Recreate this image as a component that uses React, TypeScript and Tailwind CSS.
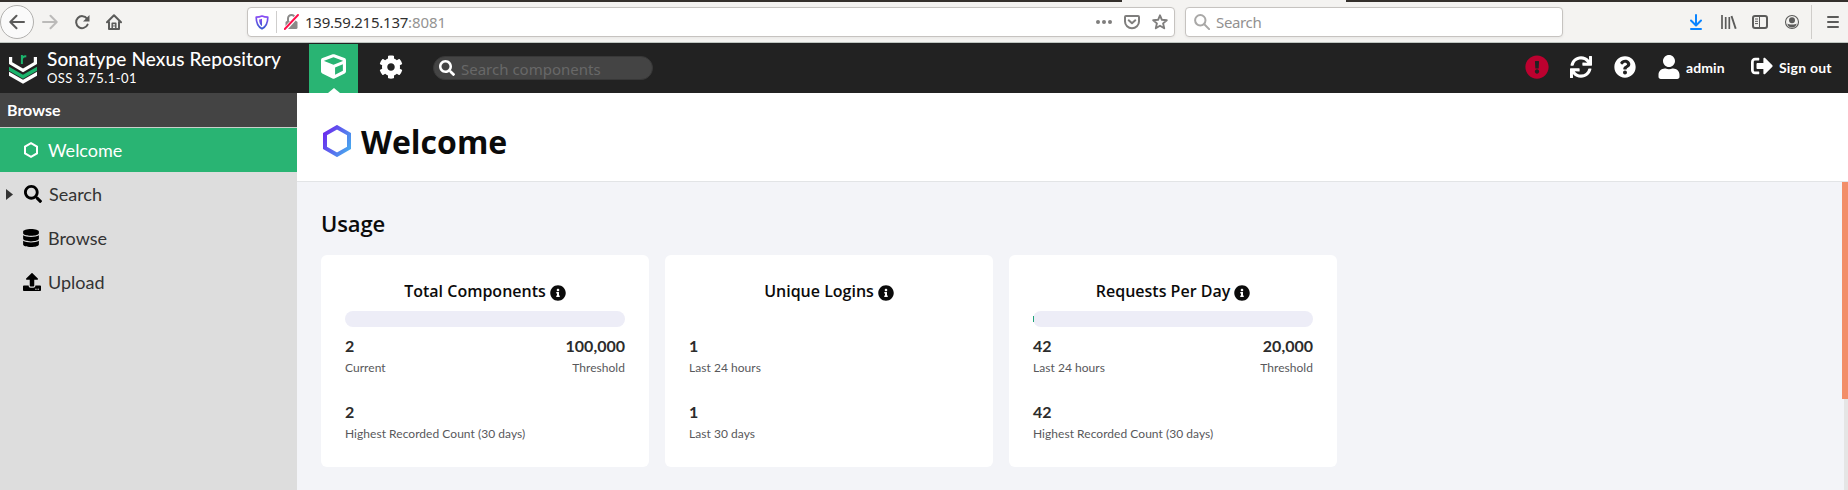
import type { ReactNode } from 'react';
import {
  FaCog,
  FaCube,
  FaDatabase,
  FaExclamationCircle,
  FaInfoCircle,
  FaQuestionCircle,
  FaSearch,
  FaSignOutAlt,
  FaSync,
  FaUpload,
  FaUser,
} from 'react-icons/fa';

function BrowserBar() {
  return (
    <div className="flex h-[43px] shrink-0 flex-col border-b border-[#bfc6c1] bg-[#f4f3f1]">
      <div className="flex h-[2px] shrink-0 justify-between">
        <div className="w-[1122px] bg-[#34302c]" />
        <div className="w-[502px] bg-[#34302c]" />
      </div>
      <div className="flex h-10 items-center font-['Noto_Sans',sans-serif] text-[15px]">
        <div className="flex h-[34px] w-[34px] shrink-0 items-center justify-center rounded-full border border-[#b1b0ae] bg-[#fafafa]">
          <svg width="16" height="16" viewBox="0 0 16 16" fill="none" stroke="#5b5b5a" strokeWidth="2" strokeLinecap="round" strokeLinejoin="round">
            <path d="M15 8H1.5M7.5 1.8 1.3 8l6.2 6.2" />
          </svg>
        </div>
        <svg className="ml-2 shrink-0" width="16" height="16" viewBox="0 0 16 16" fill="none" stroke="#bbbab9" strokeWidth="2" strokeLinecap="round" strokeLinejoin="round">
          <path d="M1 8h13.5M8.5 1.8 14.7 8l-6.2 6.2" />
        </svg>
        <svg className="ml-4 shrink-0" width="16" height="16" viewBox="0 0 16 16" fill="none" stroke="#5b5b5a" strokeWidth="2" strokeLinecap="round">
          <path d="M13.6 10.6a6 6 0 1 1-.6-6" />
          <path d="M15.5 1v6.5H9z" fill="#5b5b5a" stroke="none" />
        </svg>
        <svg className="ml-4 shrink-0" width="16" height="16" viewBox="0 0 16 16" fill="none" stroke="#5b5b5a" strokeWidth="2" strokeLinecap="round" strokeLinejoin="round">
          <path d="M1 8.2 8 1.2l7 7M3 8v7h10V8" />
          <path d="M6.2 15V9.2h3.6V15" strokeWidth="1.5" />
          <path d="M8 11v1.5" strokeWidth="1" />
        </svg>
        <div className="ml-[125px] flex h-[30px] w-[928px] shrink-0 items-center rounded-[4px] border border-[#c6c3c0] bg-white pl-[7px] pr-[6px] shadow-[0_1px_3px_rgba(0,0,0,0.06)]">
          <svg width="14" height="15" viewBox="0 0 14 15" fill="none">
            <defs>
              <linearGradient id="shield" x1="0" y1="0" x2="0" y2="1">
                <stop offset="0" stopColor="#8a4bf5" />
                <stop offset="1" stopColor="#3a5bd0" />
              </linearGradient>
            </defs>
            <path d="M7 1c2 .9 4 1.2 5.8 1.2 0 5-.8 9-5.8 11.6C2 11.200 1.200 7.200 1.200 2.200 3 2.200 5 1.900 7 1z" stroke="url(#shield)" strokeWidth="1.7" strokeLinejoin="round" />
            <path d="M7 3.700c-.9.4-1.800.6-2.900.7.1 3 .8 5.300 2.900 6.800z" fill="url(#shield)" />
          </svg>
          <div className="ml-[7px] h-[22px] w-px bg-[#cfcecd]" />
          <svg className="ml-[7px]" width="15" height="16" viewBox="0 0 15 16" fill="none">
            <path d="M4 8V4.500a3.500 3.500 0 0 1 7 0V8" stroke="#8b8a89" strokeWidth="2" />
            <rect x="1.500" y="7" width="12" height="8" rx="1.500" fill="#8b8a89" />
            <path d="M.8 15.500 14 1.200" stroke="#fff" strokeWidth="4" />
            <path d="M.8 15 14 1" stroke="#ff0f4b" strokeWidth="1.900" strokeLinecap="round" />
          </svg>
          <span className="ml-[6px] tracking-[-0.24px] text-[#303030]">
            139.59.215.137<span className="tracking-[-0.1px] text-[#949392]">:8081</span>
          </span>
          <svg className="ml-auto" width="16" height="16" viewBox="0 0 16 16" fill="#7f7e7d">
            <circle cx="2" cy="8" r="2" />
            <circle cx="8" cy="8" r="2" />
            <circle cx="14" cy="8" r="2" />
          </svg>
          <svg className="ml-3" width="16" height="16" viewBox="0 0 16 16" fill="none" stroke="#7f7e7d" strokeWidth="2" strokeLinecap="round" strokeLinejoin="round">
            <path d="M2 2h12a1 1 0 0 1 1 1v4.500a7 6.700 0 0 1-14 0V3a1 1 0 0 1 1-1z" />
            <path d="M4.700 6.300 8 9.300l3.300-3" />
          </svg>
          <svg className="ml-3" width="16" height="16" viewBox="0 0 16 16" fill="none" stroke="#7f7e7d" strokeWidth="1.900" strokeLinejoin="round">
            <path d="m8 1.300 1.900 4.500 4.900.4-3.700 3.200 1.100 4.900L8 11.800l-4.200 2.500 1.100-4.900L1.200 6.200l4.900-.4z" />
          </svg>
        </div>
        <div className="ml-[10px] flex h-[30px] w-[378px] shrink-0 items-center rounded-[4px] border border-[#c6c3c0] bg-white pl-2 shadow-[0_1px_3px_rgba(0,0,0,0.06)]">
          <svg width="16" height="16" viewBox="0 0 16 16" fill="none" stroke="#a9a8a7" strokeWidth="2" strokeLinecap="round">
            <circle cx="6.300" cy="6.300" r="5.200" />
            <path d="m10.300 10.300 4.800 4.800" />
          </svg>
          <span className="ml-[6px] tracking-[-0.35px] text-[#929190]">Search</span>
        </div>
        <svg className="ml-[126px] shrink-0" width="14" height="16" viewBox="0 0 14 16" fill="none" stroke="#0a84ff" strokeWidth="2" strokeLinecap="round" strokeLinejoin="round">
          <path d="M7 1v10M2 6.500l5 5 5-5M2 15h10" />
        </svg>
        <svg className="ml-[18px] shrink-0" width="16" height="16" viewBox="0 0 16 16" fill="none" stroke="#5b5b5a" strokeWidth="1.900">
          <path d="M1 1v14M4.700 3v12M8.300 3v12" strokeWidth="1.700" />
          <path d="m10.500 2 4.200 12.800" />
        </svg>
        <svg className="ml-[15px] shrink-0" width="16" height="16" viewBox="0 0 16 16" fill="none" stroke="#5b5b5a" strokeWidth="2" strokeLinejoin="round">
          <rect x="1" y="2" width="14" height="12" rx="2" />
          <path d="M7.500 2v12M3 5h3M3 7.300h3M3 9.600h3" strokeWidth="1" />
        </svg>
        <svg className="ml-4 shrink-0" width="16" height="16" viewBox="0 0 16 16" fill="none">
          <circle cx="8" cy="8" r="6.500" stroke="#5b5b5a" strokeWidth="1.100" />
          <circle cx="8" cy="6.200" r="3" fill="#5b5b5a" />
          <path d="M3.300 9.500c1 .9 2.300 1 4.700 1s3.700-.1 4.700-1c-.5 2.400-2.300 4-4.700 4s-4.200-1.600-4.700-4z" fill="#5b5b5a" />
        </svg>
        <div className="ml-[11px] h-[34px] w-px shrink-0 bg-[#cfcdca]" />
        <div className="ml-[15px] flex w-3 flex-col gap-[3px]">
          <div className="h-[2px] rounded-full bg-[#5b5b5a]" />
          <div className="h-[2px] rounded-full bg-[#5b5b5a]" />
          <div className="h-[2px] rounded-full bg-[#5b5b5a]" />
        </div>
      </div>
    </div>
  );
}

function AppHeader() {
  return (
    <header className="flex h-[50px] shrink-0 bg-[#222222] text-white">
      <svg className="ml-[9px] mt-[11px] shrink-0" width="28" height="30" viewBox="0 0 28 30" fill="none">
        <path d="M1.600 3v6.200L14 16.400l12.400-7.200V3" stroke="#fff" strokeWidth="3.200" />
        <path d="M0 12.800v4l14 8 14-8v-4l-14 8z" fill="#1bb46c" />
        <path d="M0 17.800v4l14 8 14-8v-4l-14 8z" fill="#fff" />
        <path d="M12.900 10V1M13 5c.3-2 2-3 4.300-2.600" stroke="#1bb46c" strokeWidth="2" />
      </svg>
      <div className="ml-[10px] w-[262px] shrink-0 whitespace-nowrap pt-[6px]">
        <div className="text-[19px] font-medium leading-5 tracking-[0.12px]">Sonatype Nexus Repository</div>
        <div className="text-[13px] leading-[18px] tracking-[0.45px]">OSS 3.75.1-01</div>
      </div>
      <div className="mt-px flex h-[49px] w-[49px] shrink-0 flex-col items-center bg-[#29b473] pt-[10px]">
        <FaCube className="h-[25px] w-[25px]" />
        <svg className="mt-auto" width="12" height="5" viewBox="0 0 12 5" fill="#fff">
          <path d="M0 5 6 0l6 5z" />
        </svg>
      </div>
      <FaCog className="ml-[21px] mt-[12px] h-6 w-6 shrink-0" />
      <div className="ml-[30px] mt-[13px] flex h-6 w-[220px] shrink-0 items-center rounded-full border border-[#383838] bg-[#444444] pl-[5px]">
        <FaSearch className="h-4 w-4" />
        <span className="ml-[6px] mt-px font-['Noto_Sans',sans-serif] text-[15px] leading-5 text-[#686868]">Search components</span>
      </div>
      <FaExclamationCircle className="ml-[872px] mt-[12px] h-6 w-6 shrink-0 text-[#bc012f]" />
      <FaSync className="ml-[21px] mt-[13px] h-[22px] w-[22px] shrink-0" />
      <FaQuestionCircle className="ml-[22px] mt-[13px] h-[22px] w-[22px] shrink-0" />
      <FaUser className="ml-[21px] mt-[12px] h-6 w-[24px] shrink-0" />
      <span className="ml-[5px] mt-[15px] w-[40px] text-[14px] font-bold leading-5 tracking-[0.1px]">admin</span>
      <FaSignOutAlt className="ml-[25px] mt-[12px] h-[22px] w-[22px] shrink-0" />
      <span className="ml-[6px] mt-[15px] whitespace-nowrap text-[14px] font-bold leading-5 tracking-[0.2px]">Sign out</span>
    </header>
  );
}

function NavItem({ icon, label, active, expandable }: { icon: ReactNode; label: string; active?: boolean; expandable?: boolean }) {
  return (
    <div className={`flex h-11 shrink-0 items-center ${active ? 'bg-[#29b473] text-white' : 'text-[#333333]'}`}>
      <div className="flex w-[23px] shrink-0 pl-[6px]">
        {expandable && (
          <svg width="8" height="11" viewBox="0 0 8 11" fill="#333">
            <path d="M0 0 7 5.500 0 11z" />
          </svg>
        )}
      </div>
      <div className={`flex shrink-0 text-black ${expandable ? 'w-[26px]' : 'w-[25px]'}`}>{icon}</div>
      <span className="text-[18px] leading-6">{label}</span>
    </div>
  );
}

function Sidebar() {
  return (
    <nav className="flex w-[297px] shrink-0 flex-col bg-[#dddddd]">
      <div className="flex h-[35px] shrink-0 items-center border-b border-[#c9d0cb] bg-[#444444] pl-[7px] text-[16px] font-bold text-white">Browse</div>
      <NavItem
        active
        label="Welcome"
        icon={
          <svg width="16" height="16" viewBox="0 0 16 16" fill="none" stroke="#fff" strokeWidth="2">
            <path d="m8 1.200 6 3.400v6.800l-6 3.400-6-3.400V4.600z" />
          </svg>
        }
      />
      <NavItem expandable label="Search" icon={<FaSearch className="ml-[1px] h-[18px] w-[18px]" />} />
      <NavItem label="Browse" icon={<FaDatabase className="h-[18px] w-4" />} />
      <NavItem label="Upload" icon={<FaUpload className="h-[18px] w-[18px]" />} />
    </nav>
  );
}

function Stat({ value, label, right }: { value: string; label: string; right?: boolean }) {
  return (
    <div className={right ? 'text-right' : ''}>
      <div className="text-[16px] font-bold leading-6 text-[#2c2c2c]">{value}</div>
      <div className="pt-px text-[12px] leading-[17px] tracking-[0.04px] text-[#58585b]">{label}</div>
    </div>
  );
}

interface Usage {
  title: string;
  current: string;
  currentLabel: string;
  threshold?: string;
  percent?: number;
  highest: string;
  highestLabel: string;
}

const usage: Usage[] = [
  { title: 'Total Components', current: '2', currentLabel: 'Current', threshold: '100,000', percent: 0, highest: '2', highestLabel: 'Highest Recorded Count (30 days)' },
  { title: 'Unique Logins', current: '1', currentLabel: 'Last 24 hours', highest: '1', highestLabel: 'Last 30 days' },
  { title: 'Requests Per Day', current: '42', currentLabel: 'Last 24 hours', threshold: '20,000', percent: 0.21, highest: '42', highestLabel: 'Highest Recorded Count (30 days)' },
];

function UsageCard({ title, current, currentLabel, threshold, percent, highest, highestLabel }: Usage) {
  return (
    <section className="h-[212px] w-[328px] shrink-0 rounded-md bg-white px-6 pt-6">
      <h3 className="flex h-6 items-center justify-center font-['Open_Sans',sans-serif] text-[16px] font-semibold leading-6 text-[#0b0b0b]">
        {title}
        <FaInfoCircle className="ml-[4px] mt-[4px] h-4 w-4" />
      </h3>
      <div className="mt-2 h-4">
        {percent !== undefined && (
          <div className="flex h-4 items-center rounded-full bg-[#ededf7]">
            {percent > 0 && <div className="h-[6px] min-w-px bg-[#1fa37a]" style={{ width: `${percent}%` }} />}
          </div>
        )}
      </div>
      <div className="mt-[7px] flex justify-between">
        <Stat value={current} label={currentLabel} />
        {threshold && <Stat right value={threshold} label="Threshold" />}
      </div>
      <div className="mt-6">
        <Stat value={highest} label={highestLabel} />
      </div>
    </section>
  );
}

export default function App() {
  return (
    <div className="flex h-[490px] w-[1848px] flex-col overflow-hidden font-['Lato',sans-serif]">
      <BrowserBar />
      <AppHeader />
      <div className="flex min-h-0 flex-1">
        <Sidebar />
        <main className="flex flex-1 flex-col bg-[#f3f4f8]">
          <div className="flex h-[89px] shrink-0 border-b border-[#e2e4e6] bg-white pl-6">
            <svg className="ml-[2px] mt-[32px]" width="28" height="32" viewBox="0 0 28 32" fill="none">
              <defs>
                <linearGradient id="hex" x1="0" y1="0.200" x2="1" y2="0.800">
                  <stop offset="0" stopColor="#6b2fee" />
                  <stop offset="1" stopColor="#48a5ee" />
                </linearGradient>
              </defs>
              <path d="m14 2.200 12 6.900v13.800l-12 6.900-12-6.900V9.100z" stroke="url(#hex)" strokeWidth="4" />
            </svg>
            <h1 className="ml-[10px] mt-[27px] font-['Open_Sans',sans-serif] text-[32px] font-bold leading-[44px] text-[#0b0b0b]">Welcome</h1>
          </div>
          <div className="flex min-h-0 flex-1 justify-between pl-6">
            <div className="pt-[25px]">
              <h2 className="font-['Open_Sans',sans-serif] text-[22px] font-semibold leading-8 tracking-[-0.1px] text-[#0b0b0b]">Usage</h2>
              <div className="mt-4 flex gap-4">
                {usage.map((u) => (
                  <UsageCard key={u.title} {...u} />
                ))}
              </div>
            </div>
            <div className="flex w-[6px] flex-col items-end">
              <div className="h-[217px] w-[6px] bg-[#f28e69]" />
              <div className="w-1 flex-1 bg-[#e5e5e5]" />
            </div>
          </div>
        </main>
      </div>
    </div>
  );
}
